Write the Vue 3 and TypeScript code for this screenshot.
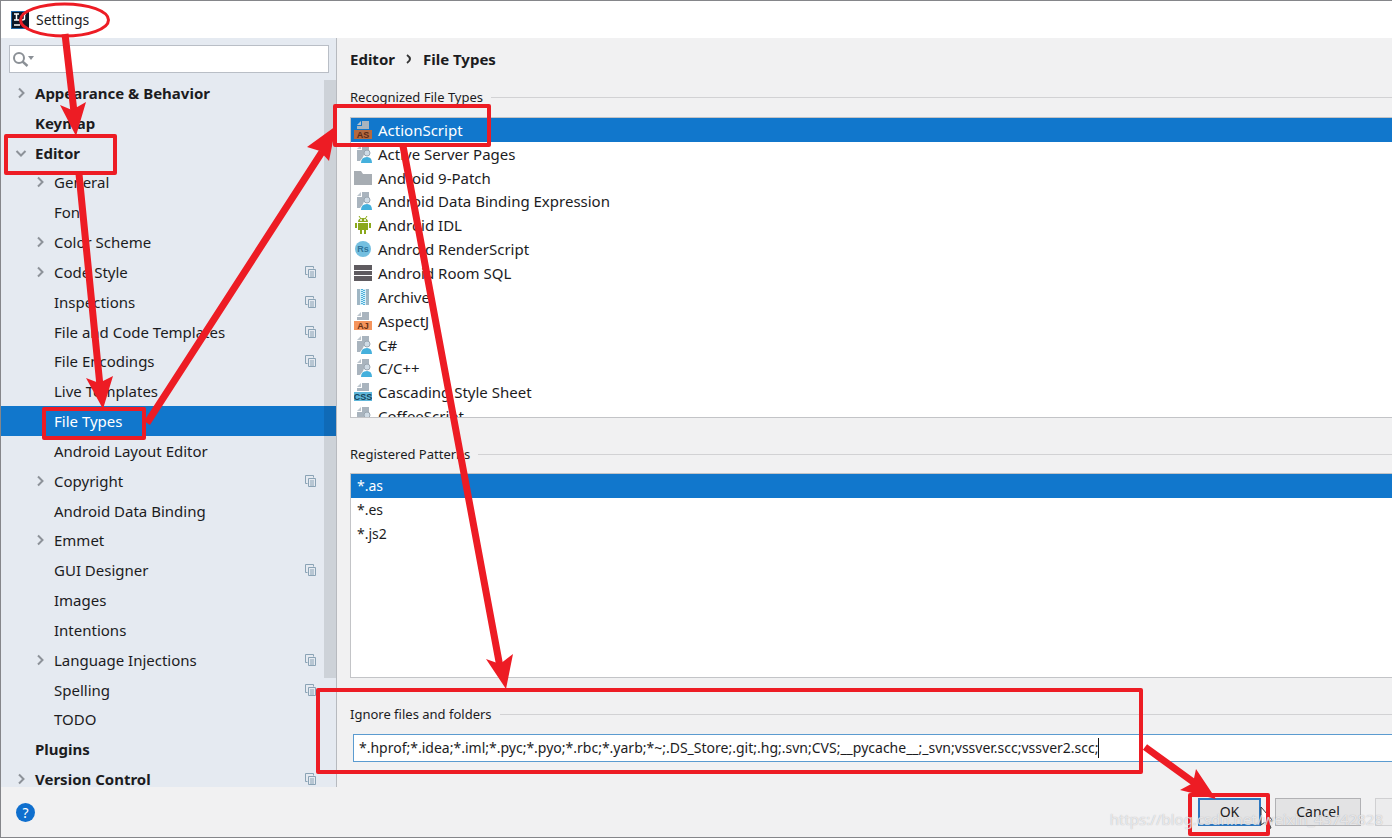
<script setup lang="ts">
import { ref } from 'vue'

interface TreeItem {
  label: string
  level: 1 | 2
  state?: 'open' | 'closed'
  scoped?: boolean
}

const tree: TreeItem[] = [
  { label: 'Appearance & Behavior', level: 1, state: 'closed' },
  { label: 'Keymap', level: 1 },
  { label: 'Editor', level: 1, state: 'open' },
  { label: 'General', level: 2, state: 'closed' },
  { label: 'Font', level: 2 },
  { label: 'Color Scheme', level: 2, state: 'closed' },
  { label: 'Code Style', level: 2, state: 'closed', scoped: true },
  { label: 'Inspections', level: 2, scoped: true },
  { label: 'File and Code Templates', level: 2, scoped: true },
  { label: 'File Encodings', level: 2, scoped: true },
  { label: 'Live Templates', level: 2 },
  { label: 'File Types', level: 2 },
  { label: 'Android Layout Editor', level: 2 },
  { label: 'Copyright', level: 2, state: 'closed', scoped: true },
  { label: 'Android Data Binding', level: 2 },
  { label: 'Emmet', level: 2, state: 'closed' },
  { label: 'GUI Designer', level: 2, scoped: true },
  { label: 'Images', level: 2 },
  { label: 'Intentions', level: 2 },
  { label: 'Language Injections', level: 2, state: 'closed', scoped: true },
  { label: 'Spelling', level: 2, scoped: true },
  { label: 'TODO', level: 2 },
  { label: 'Plugins', level: 1 },
  { label: 'Version Control', level: 1, state: 'closed', scoped: true },
]

type IconKind = 'badge' | 'user' | 'folder' | 'android' | 'rs' | 'sql' | 'archive'

interface FileType {
  label: string
  icon: IconKind
  badge?: string
  fill?: string
  ink?: string
}

const fileTypes: FileType[] = [
  { label: 'ActionScript', icon: 'badge', badge: 'AS', fill: '#b5693f', ink: '#5b2a16' },
  { label: 'Active Server Pages', icon: 'user' },
  { label: 'Android 9-Patch', icon: 'folder' },
  { label: 'Android Data Binding Expression', icon: 'user' },
  { label: 'Android IDL', icon: 'android' },
  { label: 'Android RenderScript', icon: 'rs' },
  { label: 'Android Room SQL', icon: 'sql' },
  { label: 'Archive', icon: 'archive' },
  { label: 'AspectJ', icon: 'badge', badge: 'AJ', fill: '#f5945c', ink: '#6b3216' },
  { label: 'C#', icon: 'user' },
  { label: 'C/C++', icon: 'user' },
  { label: 'Cascading Style Sheet', icon: 'badge', badge: 'CSS', fill: '#5fb6d9', ink: '#14445c' },
  { label: 'CoffeeScript', icon: 'user' },
]

const patterns = ['*.as', '*.es', '*.js2']

const selectedPage = ref('File Types')
const selectedType = ref('ActionScript')
const selectedPattern = ref('*.as')
const query = ref('')
const ignored = ref(
  '*.hprof;*.idea;*.iml;*.pyc;*.pyo;*.rbc;*.yarb;*~;.DS_Store;.git;.hg;.svn;CVS;__pycache__;_svn;vssver.scc;vssver2.scc;',
)
</script>

<template>
  <div class="window">
    <header class="titlebar">
      <svg class="logo" viewBox="0 0 18 18" aria-hidden="true">
        <rect width="18" height="18" fill="#1d66a8" />
        <rect x="1" y="1" width="17" height="16" fill="#0c1626" />
        <path d="M3 3h5M5.500 3v6M3 9h5M11 3h4M13.500 3v4.500q0 1.500-2.500 1.500" stroke="#fff" stroke-width="1.500" fill="none" />
        <path d="M3 14h6" stroke="#fff" stroke-width="1.500" />
      </svg>
      <h1>Settings</h1>
    </header>

    <div class="body">
      <nav class="sidebar" aria-label="Settings pages">
        <label class="search">
          <svg viewBox="0 0 24 18" aria-hidden="true">
            <circle cx="8" cy="8" r="5" fill="none" stroke="#8b9096" stroke-width="2" />
            <path d="M11.500 11.500l5 4.500" stroke="#8b9096" stroke-width="2.400" />
            <path d="M17 6h6l-3 4z" fill="#8b9096" />
          </svg>
          <input v-model="query" type="text" aria-label="Search settings" />
        </label>
        <div class="tree-view">
          <div class="tree">
            <button
              v-for="item in tree"
              :key="item.label"
              type="button"
              class="node"
              :class="['level-' + item.level, { selected: item.label === selectedPage, branch: item.state }]"
              @click="selectedPage = item.label"
            >
              <svg class="chevron" viewBox="0 0 12 12" aria-hidden="true">
                <path v-if="item.state === 'closed'" d="M4 1.500L8.500 6L4 10.500" />
                <path v-if="item.state === 'open'" d="M1.500 4L6 8.500L10.500 4" />
              </svg>
              <span class="name">{{ item.label }}</span>
              <svg v-if="item.scoped" class="scope" viewBox="0 0 12 12" aria-hidden="true">
                <path d="M2.500 8.500h-2v-8h8v2" />
                <path d="M3.500 3.500h7v8h-7zM5 6h4M5 8h4M5 10h4" />
              </svg>
            </button>
          </div>
          <div class="thumb"></div>
        </div>
      </nav>

      <main class="content">
        <h2 class="crumbs">
          <span>Editor</span>
          <svg viewBox="0 0 6 10" aria-hidden="true"><path d="M1 1q3 2 3 4t-3 4" /></svg>
          <span>File Types</span>
        </h2>

        <h3 class="legend legend-types">Recognized File Types</h3>
        <div class="list types">
          <div class="type-rows">
            <button
              v-for="type in fileTypes"
              :key="type.label"
              type="button"
              class="row"
              :class="{ selected: type.label === selectedType }"
              @click="selectedType = type.label"
            >
              <svg class="icon" viewBox="0 0 18 18" aria-hidden="true">
                <template v-if="type.icon === 'badge'">
                  <path d="M8 0h7v8H3V5h5z" fill="#a9b4be" />
                  <path d="M3 4l4-4v4z" fill="#bcc5cd" />
                  <rect x="0" y="9" width="18" height="9" :fill="type.fill" />
                  <text x="9" y="17" text-anchor="middle" :fill="type.ink">{{ type.badge }}</text>
                </template>
                <template v-else-if="type.icon === 'user'">
                  <path d="M8 0h7v6l-4 1-2 5-3 4H3V5h5z" fill="#a9b4be" />
                  <path d="M3 4l4-4v4z" fill="#bcc5cd" />
                  <circle cx="13" cy="8" r="3" fill="#cfdbe5" stroke="#9aa6b1" />
                  <path d="M7 18q0-6 6-6 5 0 5 6z" fill="#45b0dc" />
                </template>
                <path v-else-if="type.icon === 'folder'" d="M0 2h7l2 3h9v11H0z" fill="#a7adb3" />
                <template v-else-if="type.icon === 'android'">
                  <path d="M4 6q0-4 5-4t5 4zM4 7h10v7H4zM1 7h2v5H1zM15 7h2v5h-2zM6 14h2v4H6zM10 14h2v4h-2z" fill="#8aa81c" />
                  <path d="M5 0l2 3M13 0l-2 3" stroke="#8aa81c" />
                  <circle cx="7" cy="4" r="1" fill="#fff" />
                  <circle cx="11" cy="4" r="1" fill="#fff" />
                </template>
                <template v-else-if="type.icon === 'rs'">
                  <circle cx="9" cy="9" r="8" fill="#74bfe0" />
                  <text x="9" y="12" text-anchor="middle" fill="#2f7399">Rs</text>
                </template>
                <path v-else-if="type.icon === 'sql'" d="M0 1h18v5H0zM0 7h18v4H0zM0 12h18v5H0z" fill="#5f5b60" />
                <template v-else>
                  <rect x="3" y="1" width="12" height="16" fill="#9fb6c4" />
                  <rect x="6" y="1" width="6" height="16" fill="#d3effb" />
                  <path d="M8 1v16M10 2v15" stroke="#4fb0da" stroke-width="2" stroke-dasharray="1 1" />
                </template>
              </svg>
              <span>{{ type.label }}</span>
            </button>
          </div>
        </div>

        <h3 class="legend legend-patterns">Registered Patterns</h3>
        <div class="list patterns">
          <button
            v-for="pattern in patterns"
            :key="pattern"
            type="button"
            class="row"
            :class="{ selected: pattern === selectedPattern }"
            @click="selectedPattern = pattern"
          >
            {{ pattern }}
          </button>
        </div>

        <h3 class="legend legend-ignore"><label for="ignored">Ignore files and folders</label></h3>
        <div class="field">
          <input id="ignored" v-model="ignored" type="text" spellcheck="false" />
          <span class="caret"></span>
        </div>
      </main>
    </div>

    <footer class="footer">
      <button type="button" class="help" aria-label="Help">?</button>
      <div class="actions">
        <button type="button" class="action primary">OK</button>
        <button type="button" class="action">Cancel</button>
        <button type="button" class="action apply" aria-label="Apply" disabled></button>
      </div>
    </footer>

    <svg class="marks" width="1392" height="838" viewBox="0 0 1392 838" aria-hidden="true">
      <path d="M1261 807v18l4-3 3 7 3-1-3-7h5z" fill="#fff" stroke="#333" />
      <g fill="none" stroke="#ed1c24" stroke-width="4" stroke-linejoin="round">
        <ellipse cx="64.500" cy="20" rx="44" ry="16" stroke-width="3" />
        <rect x="6" y="136" width="109" height="37" />
        <rect x="44" y="409" width="100" height="29" />
        <rect x="335" y="106" width="154" height="39" />
        <rect x="318" y="690" width="823" height="82" />
        <rect x="1190" y="795" width="78" height="39" />
      </g>
      <g stroke="#ed1c24" stroke-width="7">
        <path d="M65 34L74 112M79 174L100 386M147 423L322 152M403 146L500 667M1145 747L1196 784" />
      </g>
      <g fill="#ed1c24">
        <path d="M76 136L60 105L72 110L86 102Z" />
        <path d="M103 409L86 378L99 383L113 376Z" />
        <path d="M336 126L307 147L320 151L329 161Z" />
        <path d="M506 689L486 659L500 664L513 654Z" />
        <path d="M1216 799L1180 790L1193 783L1196 769Z" />
      </g>
    </svg>

    <p class="watermark">https://blog.csdn.net/weixin_43742828</p>
  </div>
</template>

<style>
body {
  margin: 0;
}
</style>

<style scoped>
.window {
  position: relative;
  box-sizing: border-box;
  display: flex;
  flex-direction: column;
  min-height: 100vh;
  overflow: hidden;
  border: 1px solid #85868a;
  border-width: 1px 0 2px 1px;
  background: #f1f1f2;
  color: #1c1c1e;
  font: 14px/20px "Noto Sans", "Open Sans", sans-serif;
}
button,
input {
  font: inherit;
  color: inherit;
}
h1,
h2,
h3,
p {
  margin: 0;
  font: inherit;
}
.titlebar {
  display: flex;
  align-items: center;
  gap: 7px;
  height: 37px;
  padding-left: 10px;
  background: #fff;
}
.logo {
  width: 18px;
  height: 18px;
}
.body {
  display: flex;
  flex: 1;
}
.sidebar {
  display: flex;
  flex-direction: column;
  flex: none;
  width: 335px;
  border-right: 1px solid #b7babf;
  background: #e5eaf1;
}
.search {
  display: flex;
  align-items: center;
  height: 26px;
  margin: 7px 7px 5px 8px;
  border: 1px solid #b9bec6;
  background: #fff;
}
.search svg {
  width: 24px;
  height: 18px;
  margin-left: 1px;
}
.search input {
  flex: 1;
  border: 0;
  outline: 0;
  background: none;
}
.tree-view {
  position: relative;
  height: 709px;
  overflow: hidden;
}
.tree {
  display: grid;
  grid-auto-rows: 1fr;
  height: 716px;
  font-size: 15px;
}
.node {
  display: flex;
  align-items: center;
  min-height: 0;
  padding: 0 19px 0 0;
  border: 0;
  background: none;
  text-align: left;
}
.level-1 {
  padding-left: 14px;
  font-weight: 700;
}
.level-2 {
  padding-left: 33px;
}
.node.selected,
.row.selected {
  background: #1177cc;
  color: #fff;
}
.chevron {
  width: 12px;
  height: 12px;
  margin-right: 8px;
  fill: none;
  stroke: #8d9299;
  stroke-width: 2;
}
.name {
  flex: 1;
}
.scope {
  width: 12px;
  height: 12px;
  fill: none;
  stroke: #8aa3b5;
}
.thumb {
  position: absolute;
  top: 2px;
  right: 0;
  width: 12px;
  height: 598px;
  background: rgba(0, 0, 0, 0.1);
}
.content {
  display: flex;
  flex-direction: column;
  flex: 1;
  min-width: 0;
  padding: 11px 0 0 13px;
}
.crumbs {
  display: flex;
  align-items: center;
  gap: 11px;
  font-size: 15px;
  font-weight: 700;
}
.crumbs svg {
  width: 6px;
  height: 10px;
  fill: none;
  stroke: #333;
  stroke-width: 2;
}
.legend {
  display: flex;
  align-items: center;
  gap: 8px;
  font-size: 13px;
}
.legend::after {
  content: "";
  flex: 1;
  height: 1px;
  background: #d2d2d4;
}
.legend-types {
  margin: 18px 0 10px;
}
.legend-patterns {
  margin: 26px 0 9px;
}
.legend-ignore {
  margin: 26px 0 10px;
}
.list {
  box-sizing: border-box;
  overflow: hidden;
  border: 1px solid #c3c4c7;
  border-right: 0;
  background: #fff;
}
.types {
  height: 301px;
}
.type-rows {
  display: grid;
  grid-auto-rows: 1fr;
  height: 310px;
  font-size: 15px;
}
.patterns {
  display: flex;
  flex-direction: column;
  height: 205px;
}
.row {
  display: flex;
  align-items: center;
  gap: 6px;
  min-height: 0;
  padding: 0 3px;
  border: 0;
  background: none;
  text-align: left;
}
.patterns .row {
  height: 24px;
  padding-left: 6px;
}
.icon {
  flex: none;
  width: 18px;
  height: 18px;
}
.icon text {
  font: 700 9px "Liberation Sans", sans-serif;
}
.field {
  display: flex;
  align-items: center;
  height: 26px;
  margin-left: 3px;
  padding-left: 5px;
  border: 1px solid #5b9bd0;
  border-right: 0;
  background: #fff;
}
.field input {
  field-sizing: content;
  min-width: 0;
  padding: 0;
  border: 0;
  outline: 0;
  background: none;
}
.caret {
  width: 1px;
  height: 20px;
  background: #111;
}
.footer {
  display: flex;
  align-items: center;
  height: 50px;
  padding-left: 15px;
}
.help {
  width: 19px;
  height: 19px;
  padding: 0;
  border: 0;
  border-radius: 50%;
  background: #0f6fce;
  color: #fff;
  line-height: 19px;
}
.actions {
  display: flex;
  gap: 14px;
  margin-left: auto;
}
.action {
  box-sizing: border-box;
  width: 86px;
  height: 28px;
  padding: 0;
  border: 1px solid #b1b1b4;
  background: #e3e3e4;
}
.primary {
  width: 63px;
  border: 2px solid #2c77c0;
}
.apply {
  width: 17px;
  border-right: 0;
  border-color: #d0d0d2;
  background: #ececed;
}
.watermark {
  position: absolute;
  right: 9px;
  bottom: 6px;
  color: rgba(255, 255, 255, 0.7);
  font: 15px/24px "Noto Sans", sans-serif;
  text-shadow: 0 0 1px rgba(120, 120, 130, 0.6);
  pointer-events: none;
}
.marks {
  position: absolute;
  top: -1px;
  left: -1px;
  pointer-events: none;
}
</style>
